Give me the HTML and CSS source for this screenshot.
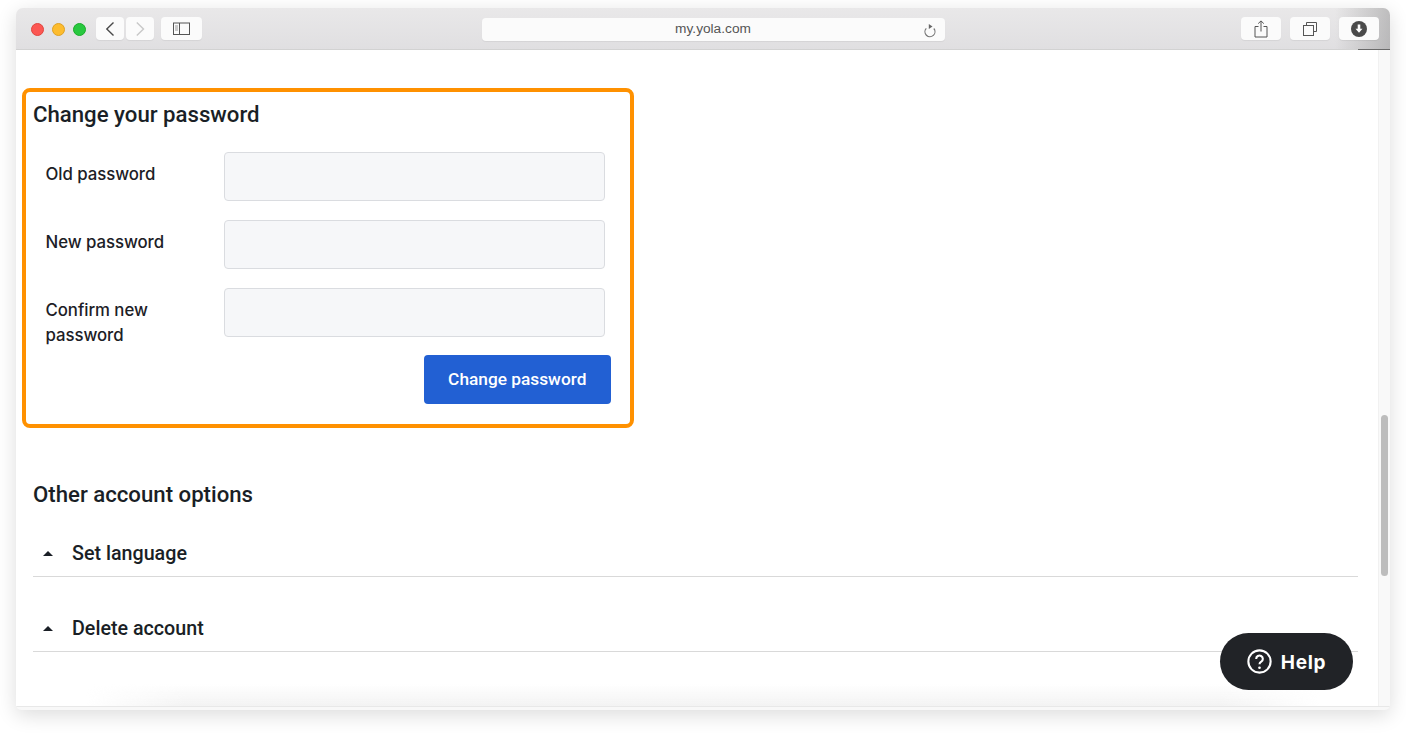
FILE: index.html
```html
<!DOCTYPE html>
<html lang="en">
<head>
<meta charset="utf-8">
<title>my.yola.com</title>
<link rel="stylesheet" href="styles.css">
</head>
<body>
<div class="window">
  <header class="toolbar">
    <div class="tool-left">
      <div class="lights">
        <span class="light red"></span>
        <span class="light yellow"></span>
        <span class="light green"></span>
      </div>
      <div class="nav-pair">
        <span class="tbtn nav"><svg width="12" height="16" viewBox="0 0 12 16"><path d="M9.500 1.500 2.800 8l6.700 6.500" fill="none" stroke="#4a4a4a" stroke-width="1.400"/></svg></span>
        <span class="tbtn nav"><svg width="12" height="16" viewBox="0 0 12 16"><path d="M2.800 1.500 9.500 8l-6.700 6.500" fill="none" stroke="#c8c8c8" stroke-width="1.400"/></svg></span>
      </div>
      <span class="tbtn side"><svg width="18" height="14" viewBox="0 0 18 14"><rect x=".5" y="1" width="16" height="11.500" fill="none" stroke="#555"/><path d="M6.500 1v11.500" stroke="#555"/><path d="M2 4h3M2 6h3M2 8h3" stroke="#999"/></svg></span>
    </div>
    <div class="address">
      <span class="url">my.yola.com</span>
      <svg class="reload" width="14" height="15" viewBox="0 0 14 15"><path d="M10.800 5.500A5 5 0 1 1 3.300 5.300" fill="none" stroke="#777" stroke-width="1.200"/><path d="M5.800 1l3.700 2.500-3.700 2.500z" fill="#666"/></svg>
    </div>
    <div class="tool-right">
      <span class="tbtn wide"><svg width="14" height="18" viewBox="0 0 14 18"><path d="M4.500 6.500H1v10.500h12V6.500H9.500M7 11.500V1M4.200 3.600 7 .9l2.800 2.700" fill="none" stroke="#555" stroke-width="1"/></svg></span>
      <span class="tbtn wide"><svg width="14" height="14" viewBox="0 0 14 14"><path d="M3.500 3.500V.5h10v9h-3" fill="none" stroke="#555"/><rect x=".5" y="3.500" width="10" height="10" fill="none" stroke="#555"/></svg></span>
      <span class="tbtn wide"><svg width="16" height="16" viewBox="0 0 16 16"><circle cx="8" cy="8" r="8" fill="#4a4a4a"/><path d="M6.700 3.500h2.600v4.200h2.200L8 11.800 4.500 7.700h2.200z" fill="#fff"/></svg></span>
    </div>
    <span class="load-line"></span>
  </header>
  <div class="viewport">
    <main class="page">
      <section class="highlight">
        <h2 class="heading">Change your password</h2>
        <form class="form">
          <div class="row"><label class="label">Old password</label><div class="input"></div></div>
          <div class="row"><label class="label">New password</label><div class="input"></div></div>
          <div class="row"><label class="label">Confirm new password</label><div class="input"></div></div>
          <div class="actions"><button type="button" class="submit">Change password</button></div>
        </form>
      </section>
      <h2 class="heading other">Other account options</h2>
      <div class="acc"><span class="caret"></span><span class="acc-title">Set language</span></div>
      <div class="acc acc-next"><span class="caret"></span><span class="acc-title">Delete account</span></div>
    </main>
    <aside class="scrollbar"><span class="thumb"></span></aside>
    <span class="bottom-fade"></span>
    <button type="button" class="help">
      <svg width="25" height="25" viewBox="0 0 24 24"><circle cx="12" cy="12" r="10.700" fill="none" stroke="#fff" stroke-width="2"/><path d="M8.800 9.500a3.200 3.200 0 1 1 4.900 2.700c-1.100.7-1.700 1.200-1.700 2.400" fill="none" stroke="#fff" stroke-width="2"/><circle cx="12" cy="18" r="1.300" fill="#fff"/></svg>
      <span class="help-text">Help</span>
    </button>
  </div>
</div>
</body>
</html>
```

FILE: styles.css
```css
* { box-sizing: border-box; }
html, body { margin: 0; height: 100%; background: #fff; overflow: hidden; }
body { padding: 8px 16px 0; font-family: Inter, "Liberation Sans", sans-serif; color: #1c2026; }

.window {
  width: 1374px;
  height: 702px;
  border-radius: 7px 7px 5px 5px;
  box-shadow: 0 5px 20px rgba(0, 0, 0, .14);
  display: flex;
  flex-direction: column;
  overflow: hidden;
  background: #f8f8f8;
  padding-bottom: 3px;
}

.toolbar {
  height: 42px;
  flex: none;
  display: flex;
  align-items: flex-start;
  padding-top: 9px;
  position: relative;
  background:
    linear-gradient(90deg, rgba(120, 120, 120, 0) 96%, rgba(120, 120, 120, .38) 100%),
    linear-gradient(#e9e8e9, #e0dfe1);
  border-bottom: 1px solid #d2d2d2;
}
.load-line {
  position: absolute;
  right: 0;
  bottom: -1px;
  width: 32px;
  height: 1px;
  background: #6a6a6a;
}
.tool-left { display: flex; align-items: center; padding-left: 15px; }
.lights { display: flex; gap: 8px; margin: 2px 10px 0 0; }
.light { width: 13px; height: 13px; border-radius: 50%; }
.red { background: #fc5753; border: 1px solid #e0443e; }
.yellow { background: #fdbc2e; border: 1px solid #dea123; }
.green { background: #28c83f; border: 1px solid #1aab29; }

.tbtn {
  height: 23px;
  background: #fbfbfb;
  border-radius: 4px;
  display: flex;
  align-items: center;
  justify-content: center;
  box-shadow: 0 1px 1px rgba(0, 0, 0, .06);
}
.nav-pair { display: flex; gap: 2px; margin-right: 7px; }
.nav { width: 28px; }
.side { width: 41px; }

.address {
  position: absolute;
  left: 466px;
  top: 10px;
  width: 463px;
  height: 23px;
  background: #fbfbfb;
  border-radius: 4px;
  box-shadow: 0 1px 1px rgba(0, 0, 0, .06);
  display: flex;
  align-items: flex-start;
  justify-content: center;
}
.url { font: 13.700px/21px "Liberation Sans", Arial, sans-serif; color: #555; margin-right: 1px; }
.reload { position: absolute; right: 8px; top: 5px; }

.tool-right { margin-left: auto; display: flex; gap: 9px; padding-right: 11px; }
.wide { width: 40px; }

.viewport {
  flex: 1;
  display: flex;
  position: relative;
  min-height: 0;
  background: #fff;
  border-bottom: 1px solid #e8e8e8;
}
.page { flex: 1; padding: 38px 20px 0 6px; min-width: 0; }
.highlight {
  width: 612px;
  height: 340px;
  border: 4px solid #ff9100;
  border-radius: 8px;
  padding: 8px 7px 0;
}
.heading { margin: 0; font: 500 22.200px/28px Roboto, sans-serif; color: #1a1f26; }
.form { margin-top: 24px; }
.row { display: flex; height: 49px; margin-bottom: 19px; }
.label {
  width: 191px;
  padding: 9.500px 30px 0 12.500px;
  font: 500 16.800px/25px Inter, sans-serif;
  letter-spacing: -.05px;
  color: #1c2026;
}
.input {
  width: 380.500px;
  height: 48.500px;
  background: #f6f7f9;
  border: 1px solid #dadce0;
  border-radius: 4px;
}
.actions { display: flex; justify-content: flex-end; width: 578px; margin-top: -1px; }
.submit {
  width: 187.500px;
  height: 49px;
  border: 0;
  border-radius: 4px;
  padding-bottom: 2px;
  background: #2260d3;
  color: #fff;
  font: 500 17.300px Roboto, sans-serif;
}
.other { margin: 52px 0 0 11px; }
.acc {
  margin: 22px 0 0 11px;
  height: 47px;
  display: flex;
  align-items: center;
  border-bottom: 1px solid #d9d9d9;
}
.acc-next { margin-top: 28px; }
.caret {
  width: 0;
  height: 0;
  margin: 0 19px 0 10px;
  border-left: 5px solid transparent;
  border-right: 5px solid transparent;
  border-bottom: 5px solid #1a1f26;
}
.acc-title { font: 500 19.700px Roboto, sans-serif; color: #1a1f26; }

.scrollbar {
  flex: none;
  width: 12px;
  background: #f9f9f9;
  border-left: 1px solid #f1f1f1;
  position: relative;
}
.thumb {
  position: absolute;
  left: 2px;
  top: 365px;
  width: 6.500px;
  height: 161px;
  border-radius: 4px;
  background: #bdbdbd;
}
.bottom-fade {
  position: absolute;
  left: 70px;
  right: 70px;
  bottom: 0;
  height: 22px;
  background: linear-gradient(rgba(240, 240, 240, 0), #f3f3f3);
  -webkit-mask-image: linear-gradient(90deg, transparent, #000 8%, #000 92%, transparent);
  mask-image: linear-gradient(90deg, transparent, #000 8%, #000 92%, transparent);
}
.help {
  position: absolute;
  left: 1204px;
  top: 583px;
  width: 133px;
  height: 57px;
  border: 0;
  border-radius: 29px;
  background: #212327;
  color: #fff;
  display: flex;
  align-items: center;
  justify-content: center;
  gap: 9px;
  font: 700 19px Inter, sans-serif;
  letter-spacing: .7px;
}
.help-text { padding-top: 2px; }
```
